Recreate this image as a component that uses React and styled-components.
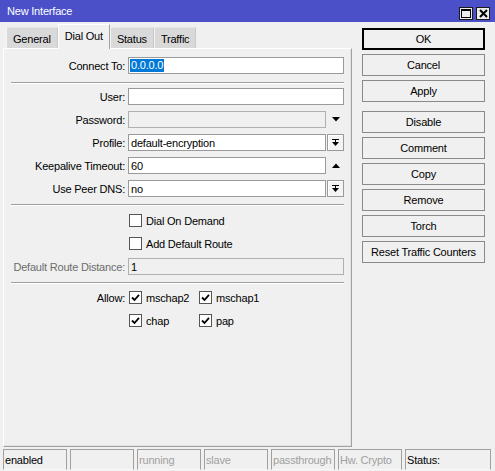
import React from 'react';
import styled, { createGlobalStyle } from 'styled-components';

const Global = createGlobalStyle`
  html, body { margin: 0; padding: 0; background: #f0f0f0; }
  body { font-family: "Liberation Sans", Arial, sans-serif; font-size: 11px; letter-spacing: -0.2px; color: #000; }
  * { box-sizing: border-box; }
`;

const Window = styled.div`
  width: 495px;
  height: 471px;
  display: flex;
  flex-direction: column;
  background: #f0f0f0;
  overflow: hidden;
`;

const TitleBar = styled.div`
  height: 22px;
  flex: none;
  background: #4b50c8;
  color: #fff;
  display: flex;
  align-items: center;
  padding: 0 5px 0 7px;
  font-size: 11px;
`;

const Title = styled.div`
  flex: 1;
`;

const TitleButtons = styled.div`
  display: flex;
  gap: 3px;
  margin-top: 4px;
`;

const TitleButton = styled.div`
  width: 14px;
  height: 13px;
  border: 1px solid #1a1a1a;
  background: #ececec;
  display: flex;
  align-items: center;
  justify-content: center;
`;

const Main = styled.div`
  flex: 1;
  min-height: 0;
  display: flex;
  gap: 10px;
  padding: 2px 10px 0 3px;
`;

const LeftCol = styled.div`
  width: 349px;
  display: flex;
  flex-direction: column;
`;

const TabRow = styled.div`
  height: 24px;
  display: flex;
  align-items: flex-end;
  padding-left: 3px;
  position: relative;
  z-index: 1;
`;

const Tab = styled.div`
  height: ${p => (p.$active ? 25 : 21)}px;
  margin-bottom: ${p => (p.$active ? -1 : 0)}px;
  padding: ${p => (p.$active ? '0 6px 2px' : '2px 6px 0')};
  display: flex;
  align-items: center;
  white-space: nowrap;
  background: ${p => (p.$active ? '#f0f0f0' : '#d9d9d9')};
  border-top: 1px solid ${p => (p.$active ? '#ffffff' : '#e6e6e6')};
  border-left: 1px solid ${p => (p.$active ? '#ffffff' : '#f4f4f4')};
  border-right: 1px solid ${p => (p.$active ? '#a0a0a0' : '#c8c8c8')};
`;

const Panel = styled.div`
  flex: 1;
  border-top: 1px solid #ffffff;
  border-left: 1px solid #ffffff;
  border-right: 1px solid #a0a0a0;
  border-bottom: 1px solid #a0a0a0;
  box-shadow: inset -1px -1px 0 #e3e3e3;
  padding: 8px 7px 0 0;
`;

const Group = styled.div`
  display: flex;
  flex-direction: column;
  gap: 6px;
`;

const Sep = styled.div`
  height: 2px;
  border-top: 1px solid #a0a0a0;
  border-bottom: 1px solid #ffffff;
  margin: ${p => p.$t}px 0 ${p => p.$b}px 7px;
`;

const Row = styled.div`
  display: grid;
  grid-template-columns: 121px 1fr;
  column-gap: 3px;
  align-items: center;
  height: 17px;
`;

const Label = styled.div`
  text-align: right;
  white-space: nowrap;
  color: ${p => (p.$disabled ? '#6d6d6d' : '#000')};
`;

const FieldGroup = styled.div`
  display: flex;
  gap: 1px;
  height: 17px;
`;

const Field = styled.div`
  flex: 1;
  min-width: 0;
  height: 17px;
  border: 1px solid ${p => (p.$disabled ? '#b0b0b0' : '#9a9a9a')};
  background: ${p => (p.$disabled ? '#f0f0f0' : '#ffffff')};
  padding: 0 2px;
  display: flex;
  align-items: center;
  white-space: nowrap;
  overflow: hidden;
`;

const Selected = styled.span`
  display: inline-block;
  height: 13px;
  line-height: 13px;
  margin-left: -1px;
  padding: 0 1px;
  background: #0078d7;
  color: #fff;
`;

const Addon = styled.div`
  width: 17px;
  height: 17px;
  flex: none;
  display: flex;
  align-items: center;
  justify-content: center;
  border: 1px solid ${p => (p.$boxed ? '#9a9a9a' : 'transparent')};
  background: ${p => (p.$boxed ? '#f4f4f4' : 'transparent')};
  box-shadow: ${p => (p.$boxed ? 'inset 1px 1px 0 #ffffff' : 'none')};
`;

const Checks = styled.div`
  display: grid;
  grid-template-columns: 70px max-content;
  align-items: center;
  margin-left: 1px;
`;

const CheckItem = styled.div`
  display: flex;
  align-items: center;
  gap: 4px;
  white-space: nowrap;
`;

const Box = styled.div`
  width: 13px;
  height: 13px;
  flex: none;
  border: 1px solid #555;
  background: #fff;
  display: flex;
  align-items: center;
  justify-content: center;
`;

const Side = styled.div`
  width: 123px;
  display: flex;
  flex-direction: column;
  gap: 4px;
  padding-top: 4px;
`;

const Button = styled.div`
  height: 22px;
  flex: none;
  border: ${p => (p.$default ? '2px solid #000' : '1px solid #8a8a8a')};
  background: #f0f0f0;
  display: flex;
  align-items: center;
  justify-content: center;
  white-space: nowrap;
  margin-top: ${p => (p.$spaced ? 5 : 0)}px;
`;

const StatusBar = styled.div`
  height: 24px;
  flex: none;
  display: flex;
  gap: 3px;
  padding: 2px 0 1px 3px;
`;

const Cell = styled.div`
  width: ${p => p.$w}px;
  flex: none;
  border-top: 1px solid #a0a0a0;
  border-left: 1px solid #a0a0a0;
  border-right: 1px solid #a0a0a0;
  border-bottom: 1px solid #f8f8f8;
  padding: 0 1px;
  display: flex;
  align-items: center;
  white-space: nowrap;
  overflow: hidden;
  color: ${p => (p.$dim ? '#a0a0a0' : '#000')};
`;

const DownArrow = () => (
  <svg width="8" height="5" viewBox="0 0 8 5"><polygon points="0,0 8,0 4,4.5" fill="#000" /></svg>
);
const UpArrow = () => (
  <svg width="8" height="5" viewBox="0 0 8 5"><polygon points="0,5 8,5 4,0.5" fill="#000" /></svg>
);
const DropIcon = () => (
  <svg width="7" height="8" viewBox="0 0 7 8">
    <rect x="0" y="0" width="7" height="1" fill="#000" />
    <rect x="3" y="1" width="1" height="2" fill="#000" />
    <polygon points="0,3 7,3 3.5,7" fill="#000" />
  </svg>
);
const CheckMark = () => (
  <svg width="9" height="9" viewBox="0 0 9 9">
    <path d="M1 4.5 L3.5 7 L8 1.8" stroke="#000" strokeWidth="1.8" fill="none" />
  </svg>
);

const Check = ({ checked, children }) => (
  <CheckItem>
    <Box>{checked && <CheckMark />}</Box>
    <span>{children}</span>
  </CheckItem>
);

export default function App() {
  return (
    <>
      <Global />
      <Window>
        <TitleBar>
          <Title>New Interface</Title>
          <TitleButtons>
            <TitleButton>
              <svg width="10" height="9" viewBox="0 0 10 9">
                <rect x="0.5" y="0.5" width="9" height="8" fill="none" stroke="#000" />
                <rect x="0" y="0" width="10" height="2" fill="#000" />
              </svg>
            </TitleButton>
            <TitleButton>
              <svg width="9" height="9" viewBox="0 0 9 9">
                <path d="M1 1 L8 8 M8 1 L1 8" stroke="#000" strokeWidth="2" />
              </svg>
            </TitleButton>
          </TitleButtons>
        </TitleBar>
        <Main>
          <LeftCol>
            <TabRow>
              <Tab>General</Tab>
              <Tab $active>Dial Out</Tab>
              <Tab>Status</Tab>
              <Tab>Traffic</Tab>
            </TabRow>
            <Panel>
              <Group>
                <Row>
                  <Label>Connect To:</Label>
                  <Field><Selected>0.0.0.0</Selected></Field>
                </Row>
              </Group>
              <Sep $t={8} $b={4} />
              <Group>
                <Row>
                  <Label>User:</Label>
                  <Field />
                </Row>
                <Row>
                  <Label>Password:</Label>
                  <FieldGroup>
                    <Field $disabled />
                    <Addon><DownArrow /></Addon>
                  </FieldGroup>
                </Row>
                <Row>
                  <Label>Profile:</Label>
                  <FieldGroup>
                    <Field>default-encryption</Field>
                    <Addon $boxed><DropIcon /></Addon>
                  </FieldGroup>
                </Row>
                <Row>
                  <Label>Keepalive Timeout:</Label>
                  <FieldGroup>
                    <Field>60</Field>
                    <Addon><UpArrow /></Addon>
                  </FieldGroup>
                </Row>
                <Row>
                  <Label>Use Peer DNS:</Label>
                  <FieldGroup>
                    <Field>no</Field>
                    <Addon $boxed><DropIcon /></Addon>
                  </FieldGroup>
                </Row>
              </Group>
              <Sep $t={7} $b={6} />
              <Group>
                <Row>
                  <Label />
                  <Checks><Check>Dial On Demand</Check></Checks>
                </Row>
                <Row>
                  <Label />
                  <Checks><Check>Add Default Route</Check></Checks>
                </Row>
                <Row>
                  <Label $disabled>Default Route Distance:</Label>
                  <Field $disabled>1</Field>
                </Row>
              </Group>
              <Sep $t={7} $b={5} />
              <Group>
                <Row>
                  <Label>Allow:</Label>
                  <Checks>
                    <Check checked>mschap2</Check>
                    <Check checked>mschap1</Check>
                  </Checks>
                </Row>
                <Row>
                  <Label />
                  <Checks>
                    <Check checked>chap</Check>
                    <Check checked>pap</Check>
                  </Checks>
                </Row>
              </Group>
            </Panel>
          </LeftCol>
          <Side>
            <Button $default>OK</Button>
            <Button>Cancel</Button>
            <Button>Apply</Button>
            <Button $spaced>Disable</Button>
            <Button>Comment</Button>
            <Button>Copy</Button>
            <Button>Remove</Button>
            <Button>Torch</Button>
            <Button>Reset Traffic Counters</Button>
          </Side>
        </Main>
        <StatusBar>
          <Cell $w={64}>enabled</Cell>
          <Cell $w={64} />
          <Cell $w={64} $dim>running</Cell>
          <Cell $w={64} $dim>slave</Cell>
          <Cell $w={64} $dim>passthrough</Cell>
          <Cell $w={64} $dim>Hw. Crypto</Cell>
          <Cell $w={86}>Status:</Cell>
        </StatusBar>
      </Window>
    </>
  );
}
